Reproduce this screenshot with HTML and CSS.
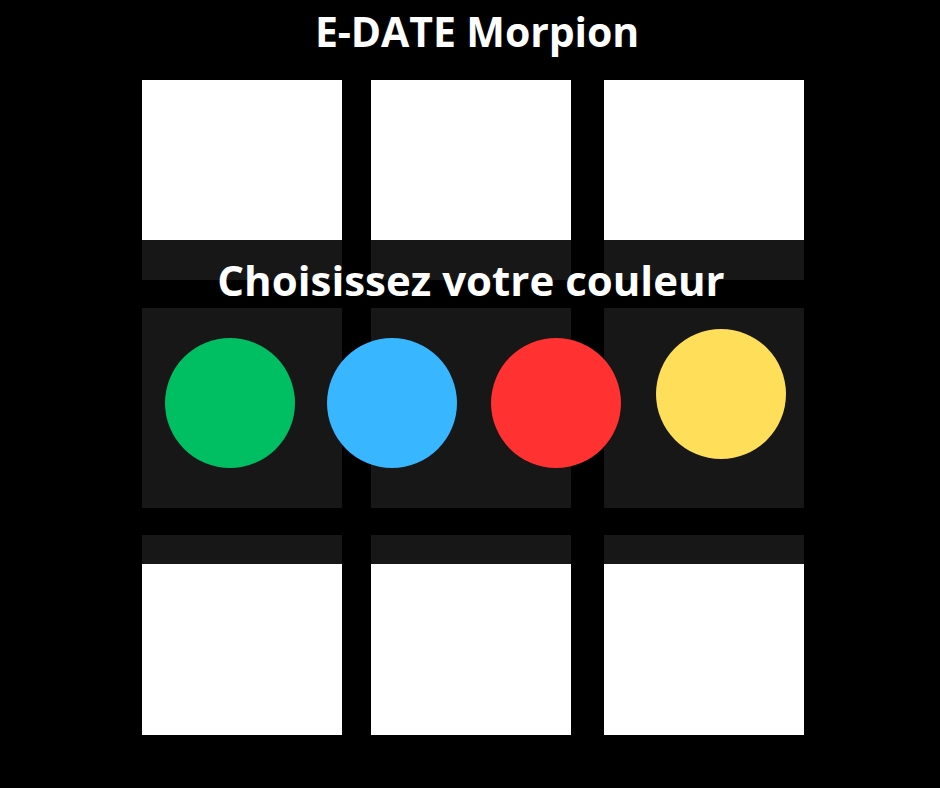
FILE: index.html
```html
<!DOCTYPE html>
<html lang="fr">
<head>
<meta charset="utf-8">
<title>E-DATE Morpion</title>
<link rel="stylesheet" href="styles.css">
</head>
<body>
  <div class="page">
    <h1 class="title">E-DATE Morpion</h1>
    <div class="board">
      <div class="cell"></div>
      <div class="cell"></div>
      <div class="cell"></div>
      <div class="cell"></div>
      <div class="cell"></div>
      <div class="cell"></div>
      <div class="cell"></div>
      <div class="cell"></div>
      <div class="cell"></div>
    </div>
    <div class="overlay">
      <h2 class="prompt">Choisissez votre couleur</h2>
      <div class="colors">
        <button class="swatch swatch-green" aria-label="Vert"></button>
        <button class="swatch swatch-blue" aria-label="Bleu"></button>
        <button class="swatch swatch-red" aria-label="Rouge"></button>
        <button class="swatch swatch-yellow" aria-label="Jaune"></button>
      </div>
    </div>
  </div>
</body>
</html>
```

FILE: styles.css
```css
html, body {
  margin: 0;
  padding: 0;
  background: #000;
}

.page {
  position: relative;
  width: 940px;
  height: 788px;
  background: #000;
  font-family: "Open Sans", "Liberation Sans", sans-serif;
  color: #fff;
}

.title {
  margin: 0;
  padding-top: 6px;
  padding-left: 14px;
  height: 74px;
  font-size: 41px;
  font-weight: 700;
  line-height: 50px;
  text-align: center;
  letter-spacing: -0.1px;
}

.board {
  display: grid;
  grid-template-columns: 229px 233px 200px;
  grid-template-rows: 228px 227px 200px;
  margin-left: 142px;
}

.cell {
  width: 200px;
  height: 200px;
  background: #fff;
}

.overlay {
  position: absolute;
  left: 0;
  top: 240px;
  width: 100%;
  height: 324px;
  background: rgba(0, 0, 0, 0.91);
}

.prompt {
  margin: 0;
  padding-top: 15px;
  padding-left: 2px;
  font-size: 42px;
  font-weight: 700;
  line-height: 50px;
  text-align: center;
}

.colors {
  display: flex;
  align-items: flex-end;
  gap: 32px;
  margin-top: 24px;
  padding-left: 165px;
}

.swatch {
  width: 130px;
  height: 130px;
  border: 0;
  padding: 0;
  border-radius: 50%;
  cursor: pointer;
  flex: none;
}

.swatch-green { background: #00bf63; }
.swatch-blue { background: #38b6ff; }
.swatch-red { background: #ff3131; margin-left: 2px; }
.swatch-yellow { background: #ffde59; margin-left: 3px; margin-bottom: 9px; }
```
